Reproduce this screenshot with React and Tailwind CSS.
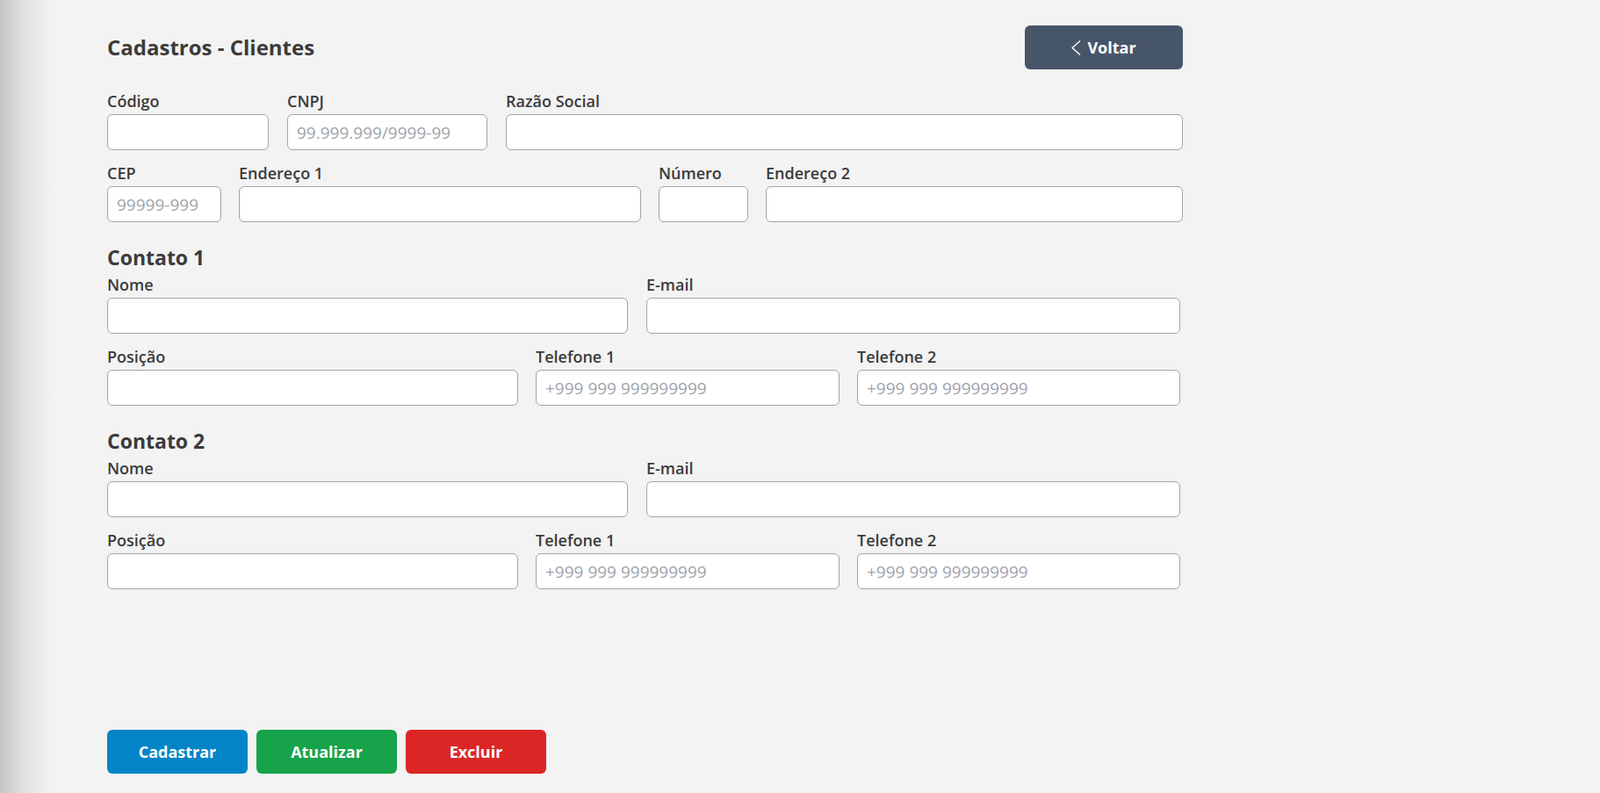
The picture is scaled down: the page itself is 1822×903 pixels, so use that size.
import { useState } from 'react';

const font = { fontFamily: '"Open Sans", "Noto Sans", sans-serif' };

function Field({ label, placeholder, className }) {
  return (
    <div className={className}>
      <label className="block text-[18px] leading-6 font-semibold text-[#3b3b3b]">
        {label}
      </label>
      <input
        type="text"
        placeholder={placeholder}
        className="mt-[3px] block w-full h-[41px] rounded-md border border-[#a3a3ab] bg-white px-[10px] text-[19px] text-[#333] placeholder:text-[#a0a4ad] outline-none"
      />
    </div>
  );
}

function Contato({ title }) {
  return (
    <div className="mt-6 w-[1222px]">
      <h2 className="text-[23px] leading-8 font-bold text-[#3b3b3b]">{title}</h2>
      <div className="mt-[3px] flex gap-[21px]">
        <Field label="Nome" className="w-[593px]" />
        <Field label="E-mail" className="flex-1" />
      </div>
      <div className="mt-[14px] flex gap-[20px]">
        <Field label="Posição" className="w-[468px]" />
        <Field label="Telefone 1" placeholder="+999 999 999999999" className="w-[346px]" />
        <Field label="Telefone 2" placeholder="+999 999 999999999" className="flex-1" />
      </div>
    </div>
  );
}

export default function App() {
  const [saved, setSaved] = useState(false);

  return (
    <div className="flex min-h-screen bg-[#f3f3f3]" style={font}>
      <div className="w-[60px] shrink-0 bg-gradient-to-r from-[#c6c6c6] via-[#e4e4e4] to-[#f3f3f3]" />
      <div className="flex flex-col pl-[62px] pt-[29px] pb-[22px]">
        <div className="flex w-[1225px] items-center justify-between">
          <h1 className="text-[24px] font-bold text-[#3b3b3b]">Cadastros - Clientes</h1>
          <button
            type="button"
            className="flex h-[50px] w-[180px] items-center justify-center gap-[7px] rounded-md bg-[#475569] text-[18px] font-bold text-white"
          >
            <svg width="11" height="17" viewBox="0 0 11 17" fill="none" stroke="currentColor" strokeWidth="1.4">
              <polyline points="10,0.5 1,8.5 10,16.5" />
            </svg>
            Voltar
          </button>
        </div>

        <div className="mt-6 flex w-[1225px] gap-[21px]">
          <Field label="Código" className="w-[184px]" />
          <Field label="CNPJ" placeholder="99.999.999/9999-99" className="w-[228px]" />
          <Field label="Razão Social" className="flex-1" />
        </div>
        <div className="mt-[14px] flex w-[1225px] gap-[20px]">
          <Field label="CEP" placeholder="99999-999" className="w-[130px]" />
          <Field label="Endereço 1" className="w-[458px]" />
          <Field label="Número" className="w-[102px]" />
          <Field label="Endereço 2" className="flex-1" />
        </div>

        <Contato title="Contato 1" />
        <Contato title="Contato 2" />

        <div className="mt-auto flex gap-[10px]">
          <button
            type="button"
            onClick={() => setSaved(true)}
            className="h-[50px] w-[160px] rounded-md bg-[#0284c7] text-[18px] font-bold text-white"
          >
            Cadastrar
          </button>
          <button type="button" className="h-[50px] w-[160px] rounded-md bg-[#16a34a] text-[18px] font-bold text-white">
            Atualizar
          </button>
          <button type="button" className="h-[50px] w-[160px] rounded-md bg-[#dc2626] text-[18px] font-bold text-white">
            Excluir
          </button>
        </div>
        {saved && <span className="sr-only">salvo</span>}
      </div>
    </div>
  );
}
